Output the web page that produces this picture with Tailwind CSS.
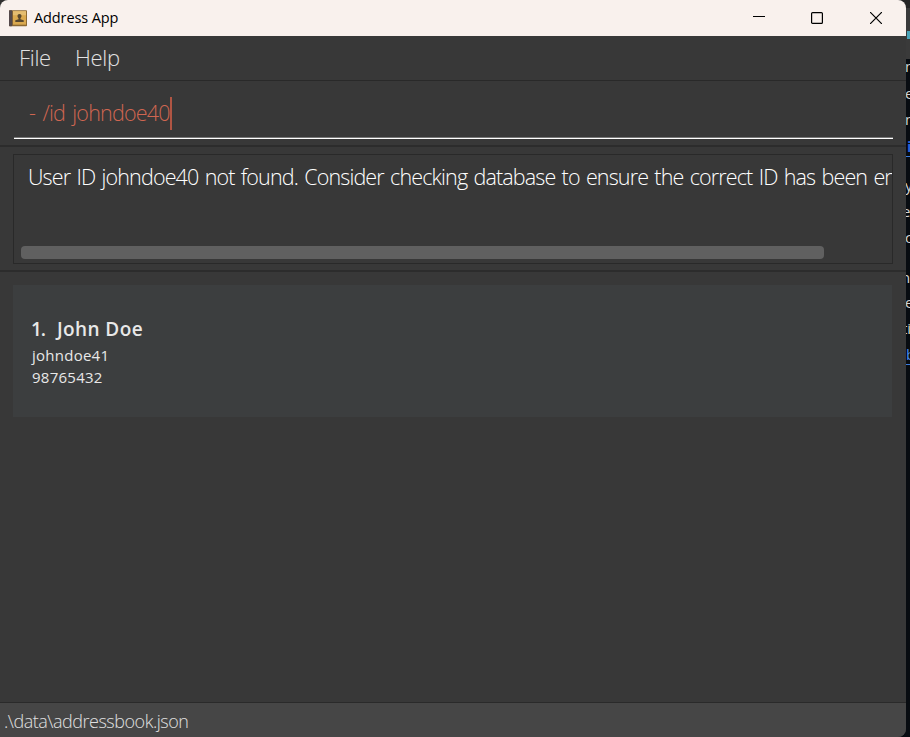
<!DOCTYPE html>
<html lang="en">
<head>
<meta charset="utf-8">
<title>Address App</title>
<script src="https://cdn.jsdelivr.net/npm/@tailwindcss/browser@4"></script>
</head>
<body class="relative h-[737px] w-[910px] overflow-hidden bg-[#080c11] font-['Open_Sans','Noto_Sans',sans-serif]">
  <!-- Page behind the window -->
  <div class="absolute top-0 right-0 h-[737px] w-[10px] overflow-hidden text-[15px] leading-[20px] text-[#d5d5d5]">
    <div class="h-[8px] bg-[#252525]"></div>
    <div class="h-[51px] bg-[#3a3a3a]"></div>
    <span class="absolute top-[31px] left-[7px] h-[8px] w-[3px] bg-[#4aa3b8]"></span>
    <span class="absolute top-[56px] left-[5px]">m</span>
    <span class="absolute top-[83px] left-[5px]">e</span>
    <span class="absolute top-[109px] left-[5px]">m</span>
    <span class="absolute top-[136px] left-[7px] font-bold text-[#2563d9]">i</span>
    <span class="absolute top-[156px] left-[6px] h-px w-[4px] bg-[#3b7de0]"></span>
    <span class="absolute top-[175px] left-[5px]">y</span>
    <span class="absolute top-[201px] left-[2px]">el</span>
    <span class="absolute top-[227px] left-[5px]">c</span>
    <span class="absolute top-[267px] left-[1px]">ns</span>
    <span class="absolute top-[292px] left-[5px]">e</span>
    <span class="absolute top-[318px] left-[2px]">ti</span>
    <span class="absolute top-[344px] left-[6px] text-[#4b8df0]">b</span>
    <span class="absolute top-[364px] left-[6px] h-px w-[4px] bg-[#3b7de0]"></span>
  </div>
  <div class="absolute top-0 left-0 size-3 bg-[#303030]"></div>

  <main class="relative flex h-[737px] w-[906px] flex-col overflow-hidden rounded-t-[8px] rounded-br-[8px] bg-[#383838]">
    <header class="flex h-9 shrink-0 items-center bg-[#f9f1ed] pl-[9px] text-black">
      <svg class="mr-[7px] h-[17px] w-[18px] shrink-0" viewBox="0 0 18 17">
        <rect width="18" height="16" y=".3" rx=".8" fill="#8d6932"/>
        <rect width="3.2" height="16" y=".3" rx=".7" fill="#54494b"/>
        <rect x="4" y="1.2" width="13" height="13.5" fill="#dba94e"/>
        <rect x="4" y="1.2" width="13" height="4" fill="#e5bd70"/>
        <path d="M10.5 4c1.300 0 2 .8 2 2 0 1-.5 1.700-1 2.200v1l3.200 1v1.800H6.300v-1.800l3.200-1v-1c-.5-.5-1-1.200-1-2.200 0-1.200.7-2 2-2z" fill="#59482e"/>
      </svg>
      <h1 class="text-[14.5px] leading-5 whitespace-nowrap tracking-[-0.1px]">Address App</h1>
      <div class="ml-auto flex items-center">
        <svg class="mr-[46px] h-3 w-3" viewBox="0 0 12 12"><path d="M0 4.500h12" stroke="#000"/></svg>
        <svg class="mr-[47px] h-3 w-3" viewBox="0 0 12 12"><rect x=".6" y=".1" width="10.800" height="10.800" rx="1" fill="none" stroke="#000" stroke-width="1.200" transform="translate(0 .5)"/></svg>
        <svg class="mr-[24px] h-3 w-3" viewBox="0 0 12 12"><path d="M0 0l12 12M12 0L0 12" stroke="#000" stroke-width="1.200"/></svg>
      </div>
    </header>

    <nav class="flex h-[45px] shrink-0 items-center border-b border-[#292929] pb-[2px] pl-[19px] text-[22px] leading-[30px] font-light text-[#e2e2e2]">
      <span class="w-[56px] tracking-[-0.3px]">File</span><span class="tracking-[-0.3px]">Help</span>
    </nav>

    <section class="h-[66px] shrink-0 border-b-2 border-[#2c2c2c] px-[14px] pr-[13px] pt-[13px]">
      <div class="flex h-[44px] items-center border-b border-b-[#777] pl-[15px] pb-[4px] text-[21.5px] font-light text-[#d06651]">
        <span class="-mt-[1px] tracking-[-0.8px] [word-spacing:2.5px] whitespace-nowrap">- /id johndoe40</span><span class="h-[33px] w-[2px] bg-[#b05543]"></span>
      </div>
      <div class="h-px bg-white"></div>
    </section>

    <section class="h-[125px] shrink-0 border-b-2 border-[#2c2c2c] pt-[7px] pr-[13px] pl-[13px]">
      <div class="flex h-[110px] flex-col overflow-hidden border border-[#292929] pl-[7px]">
        <p class="overflow-hidden pt-[7px] pl-[7px] text-[21.5px] leading-[30px] font-light tracking-[-0.86px] [word-spacing:1.5px] whitespace-nowrap text-white">User ID johndoe40 not found. Consider checking database to ensure the correct ID has been entered.</p>
        <div class="mt-auto mb-[4px] h-[13px] w-[803px] rounded-[4px] bg-[#606060]"></div>
      </div>
    </section>

    <section class="flex-1 pt-[13px] pr-[14px] pl-[13px]">
      <article class="h-[132px] bg-[#3c3e3f] pt-[31px] pl-[19px] text-[#e8e8e8]">
        <h2 class="flex text-[19px] leading-[26px] font-semibold"><span class="-ml-px w-[26px] tracking-[-1px]">1.</span><span class="tracking-[0.4px]">John Doe</span></h2>
        <p class="mt-[2px] text-[15px] leading-[22px] tracking-[0.25px]">johndoe41</p>
        <p class="text-[15px] leading-[22px] tracking-[0.25px]">98765432</p>
      </article>
    </section>

    <footer class="h-[35px] shrink-0 border-t border-[#2a2a2a] bg-[#464646] pt-[5px] pl-[4px] text-[18px] leading-[26px] font-light text-[#e0e0e0]"><span class="tracking-[-0.48px]">.\data\addressbook.json</span></footer>
  </main>
</body>
</html>
